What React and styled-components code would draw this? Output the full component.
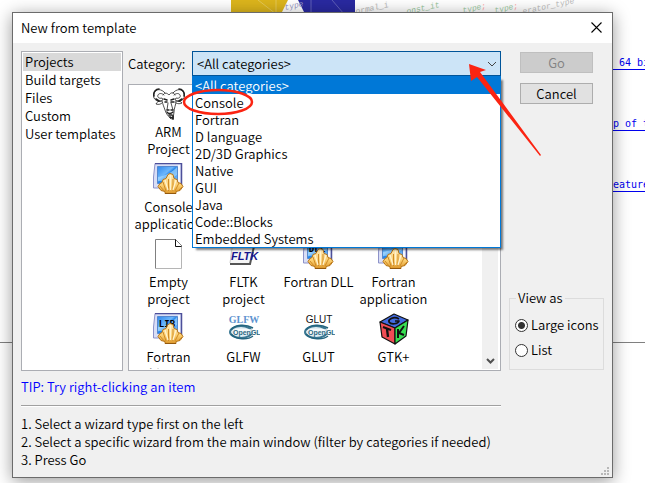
import React, { useState } from 'react';
import styled, { createGlobalStyle, css } from 'styled-components';

const FONT = '"Noto Sans CJK SC", "Noto Sans", sans-serif';

const GlobalStyle = createGlobalStyle`
  *, *::before, *::after { box-sizing: border-box; }
  body {
    margin: 0;
    background: #fff;
    color: #000;
    font: 350 13px/18px ${FONT};
    overflow: hidden;
  }
  button, select, input { font: inherit; color: inherit; margin: 0; }
`;

const Page = styled.div`
  display: grid;
  grid-template-columns: minmax(0, 1fr);
  min-height: 100vh;
`;

const Backdrop = styled.div`
  grid-area: 1 / 1;
  display: flex;
  flex-direction: column;
  overflow: hidden;
`;

const Banner = styled.svg`
  flex: none;
  align-self: flex-end;
  width: 414px;
  height: 40px;
`;

const SiteLinks = styled.nav`
  align-self: flex-end;
  display: flex;
  flex-direction: column;
  gap: 46px;
  width: 32px;
  padding-top: 15px;
  overflow: hidden;
`;

const SiteLink = styled.a`
  height: 15px;
  padding-top: 2px;
  border-bottom: 1px solid #0000ee;
  color: #0000ee;
  font: 10px/12px "DejaVu Sans Mono", monospace;
  text-decoration: none;
  white-space: pre;
`;

const PageRule = styled.hr`
  width: 100%;
  margin: 150px 0 0;
  border: 0;
  border-top: 1px solid #808080;
`;

const Dialog = styled.section`
  grid-area: 1 / 1;
  align-self: start;
  position: relative;
  margin: 12px 32px 5px 12px;
  border: 1px solid #6b6b6b;
  background: #f0f0f0;
  box-shadow: 0 3px 16px rgba(0, 0, 0, 0.4);
`;

const TitleBar = styled.header`
  display: flex;
  align-items: center;
  justify-content: space-between;
  height: 30px;
  padding: 0 8px;
  background: #fff;
`;

const Title = styled.h1`
  margin: 0;
  font-size: 13px;
  font-weight: inherit;
`;

const CloseButton = styled.button`
  display: flex;
  padding: 0 2px 2px;
  border: 0;
  background: none;
`;

const Body = styled.div`
  display: grid;
  grid-template-columns: minmax(0, 1fr) 95px;
  gap: 8px;
  padding: 8px;
`;

const Main = styled.div`
  display: flex;
  flex-direction: column;
  min-width: 0;
`;

const Panes = styled.div`
  display: grid;
  grid-template-columns: 102px minmax(0, 1fr);
  gap: 5px;
`;

const TypeList = styled.ul`
  margin: 0;
  padding: 1px;
  list-style: none;
  border: 1px solid #abadb3;
  background: #fff;
`;

const TypeItem = styled.li`
  padding-left: 2px;
  background: ${(p) => (p.$selected ? '#d9d9d9' : 'transparent')};
`;

const Templates = styled.div`
  display: flex;
  flex-direction: column;
  gap: 8px;
`;

const CategoryRow = styled.div`
  display: flex;
  align-items: center;
  height: 25px;
`;

const CategoryLabel = styled.label`
  flex: none;
  width: 64px;
`;

const Combo = styled.div`
  position: relative;
  flex: 1;
  height: 25px;
`;

const ComboSelect = styled.select`
  appearance: none;
  width: 100%;
  height: 25px;
  padding: 0 24px 0 4px;
  border: 1px solid #005499;
  border-radius: 0;
  background: #cce4f7;
  outline: 0;
`;

const ComboArrow = styled.svg`
  position: absolute;
  top: 9px;
  right: 4px;
  width: 10px;
  height: 8px;
  pointer-events: none;
`;

const Popup = styled.ul`
  position: absolute;
  z-index: 2;
  top: 25px;
  left: 0;
  right: 0;
  margin: 0;
  padding: 0;
  list-style: none;
  border: 1px solid #0078d7;
  background: #fff;
  box-shadow: 3px 3px 2px -1px rgba(0, 0, 0, 0.5);
`;

const PopupItem = styled.li`
  height: 17px;
  padding-left: 2px;
  line-height: 17px;
  cursor: default;
  ${(p) => p.$selected && css`
    background: #0078d7;
    color: #fff;
  `}
`;

const Circle = styled.svg`
  position: absolute;
  z-index: 3;
  top: 36px;
  left: -10px;
  width: 72px;
  height: 30px;
  pointer-events: none;
`;

const Pointer = styled.svg`
  position: absolute;
  z-index: 3;
  top: 11px;
  right: -41px;
  width: 76px;
  height: 94px;
  pointer-events: none;
`;

const IconPane = styled.div`
  display: grid;
  grid-template-columns: minmax(0, 1fr) 17px;
  height: 287px;
  padding: 1px;
  border: 1px solid #abadb3;
  background: #fff;
  overflow: hidden;
`;

const IconGrid = styled.ul`
  display: grid;
  grid-template-columns: repeat(4, 75px);
  grid-auto-rows: 75px;
  min-height: 0;
  margin: 0;
  padding: 2px 0 0 1px;
  list-style: none;
  overflow: hidden;
`;

const IconCell = styled.li`
  display: flex;
  flex-direction: column;
  align-items: center;
  gap: 3px;
  text-align: center;
  line-height: 17px;
  ${(p) => p.$startsRow && css`grid-column: 1;`}

  svg { flex: none; width: 32px; height: 32px; }
`;

const ScrollBar = styled.div`
  display: flex;
  align-items: flex-end;
  justify-content: center;
  padding-bottom: 4px;
  border-right: 1px solid #fff;
  background: #f0f0f0;
`;

const Tip = styled.p`
  margin: 7px 0 9px;
  color: #0000ff;
`;

const Divider = styled.hr`
  width: 100%;
  height: 2px;
  margin: 0 0 8px;
  border: 0;
  border-top: 1px solid #a0a0a0;
  border-bottom: 1px solid #fff;
`;

const Steps = styled.div`
  p { margin: 0; white-space: nowrap; }
`;

const Side = styled.div`
  display: flex;
  flex-direction: column;
`;

const Actions = styled.div`
  display: flex;
  flex-direction: column;
  gap: 10px;
  padding: 1px 11px 0;
`;

const PushButton = styled.button`
  height: 21px;
  padding: 0;
  border: 1px solid #adadad;
  background: #e1e1e1;
  line-height: 18px;

  &:disabled {
    border-color: #bfbfbf;
    background: #cccccc;
    color: #838383;
  }
`;

const ViewAs = styled.fieldset`
  display: flex;
  flex-direction: column;
  gap: 7px;
  min-width: 0;
  height: 81px;
  margin: 185px 0 0;
  padding: 9px 5px 0;
  border: 1px solid #dcdcdc;

  legend { margin-left: 1px; padding: 0 2px; }
`;

const RadioLabel = styled.label`
  display: flex;
  align-items: center;
  gap: 3px;
  white-space: nowrap;

  input {
    appearance: none;
    flex: none;
    width: 13px;
    height: 13px;
    border: 1px solid #333;
    border-radius: 50%;
    background: #fff;
  }
  input:checked {
    background: radial-gradient(circle, #333 0 3px, #fff 4px);
  }
`;

const Grip = styled.svg`
  position: absolute;
  right: 3px;
  bottom: 2px;
  width: 8px;
  height: 8px;
`;

const GnuIcon = () => (
  <svg viewBox="0 0 32 32" fill="none" stroke="#222" strokeWidth=".8" strokeLinecap="round">
    <path d="M12 5C9 1 3 0 1 5s2 9 7 8c2 0 2-2 1-3-3 1-5-1-4-3s4-2 6 0M20 5c3-4 9-5 11 0s-2 9-7 8c-2 0-2-2-1-3 3 1 5-1 4-3s-4-2-6 0" />
    <path d="M1 8C0 4 3 1 6 1M31 8C32 4 29 1 26 1M3 11l3 2M29 11l-3 2" strokeWidth="1.6" />
    <path d="M10 7c2-3 4-2 6 0 2-3 5-3 6 0M8 13c-3 0-4 1-5 3 3 1 5 0 6-1M24 13c3 0 4 1 5 2-2 1-4 1-6 0" />
    <path d="M9 13c1 4 2 6 3 9s2 5 6 9M23 13c0 4-2 7-2 11l-1 7M15 15l-1 7M18 15l2 7" />
    <path d="M11 11l3 1M21 11l-3 1M12 14h2M18 14h3M14 24c1 2 4 2 6 0M14 22h2M18 22h2" strokeWidth="1.5" />
    <path d="M16 27h3M17 29l2 1M20 28v3" strokeWidth="1.700" />
  </svg>
);

const ShellIcon = ({ text }) => (
  <svg viewBox="0 0 32 32">
    <defs>
      <linearGradient id="screen" x1="0" y1="0" x2="1" y2="1">
        <stop offset="0" stopColor="#2f87ec" />
        <stop offset="0.4" stopColor="#6db7fb" />
        <stop offset="0.5" stopColor="#2484ea" />
        <stop offset="1" stopColor="#8ccbff" />
      </linearGradient>
      <linearGradient id="shell" x1="0" y1="0" x2="0" y2="1">
        <stop offset="0" stopColor="#ffe9b4" />
        <stop offset="0.6" stopColor="#fbcf70" />
        <stop offset="1" stopColor="#dc962a" />
      </linearGradient>
    </defs>
    <path d="M2 .5h26.500V25H.5V14z" fill="#d9def6" stroke="#8d92c9" />
    <path d="M2 .5h26.500V24" fill="none" stroke="#4d509a" strokeWidth="1.500" />
    <path d="M26 2v20" stroke="#f4f6ff" strokeWidth="2" />
    <path d="M4.500 3.500h20v17h-20z" fill="url(#screen)" stroke="#5489cf" />
    <path d="M5 14C12 13 20 9 24 4v8C18 16 12 18 5 18z" fill="#b2e1ff" opacity=".6" />
    {text && <text x="14" y="14" textAnchor="middle" fontFamily="DejaVu Sans Mono, monospace" fontWeight="bold" fontSize="9">{text}</text>}
    <path d="M12 30.500v-2l-4-1-3-4 2-3 2-1 1-3 3-1 2-4 2-1 3 1 1 4 3 1 1 3 3 1 2 3-3 4-4 1v2z" fill="url(#shell)" stroke="#b67416" />
    <path d="M15.500 28V16M20 28V16M13 28l-3-9M22 28l4-8M11 28l-4-5M25 28l4-4" fill="none" stroke="#cf8b26" />
    <path d="M17.500 12v15M12 17l3 10M23 17l-3 10" fill="none" stroke="#fff3cf" strokeWidth="1.300" />
    <path d="M12 30.500h11" stroke="#94590d" />
  </svg>
);

const EmptyIcon = () => (
  <svg viewBox="0 0 32 32" fill="none">
    <path d="M2.500 31V1.500H23" stroke="#808080" />
    <path d="M2 30.500h26.500V8" stroke="#b5b5b5" />
    <path d="M22.500 1.500v7h6" stroke="#111" />
    <path d="M23 2l6 6" stroke="#808080" />
  </svg>
);

const FltkIcon = () => (
  <svg viewBox="0 0 32 32">
    <path d="M6 3h21l-5 23H2V9z" fill="#f5f5f5" />
    <path d="M2 26h20l5-22" fill="none" stroke="#555" strokeWidth="2" />
    <path d="M2 25L5 4" stroke="#ccc" />
    <text x="3" y="22" fontFamily="Liberation Sans, sans-serif" fontWeight="bold" fontStyle="italic" fontSize="11" fill="#17178f">FLTK</text>
  </svg>
);

const OpenGlIcon = ({ text, serif }) => (
  <svg viewBox="0 0 32 32">
    <text
      x="16" y="10" textAnchor="middle" fontSize="10"
      fontFamily={serif ? 'Liberation Serif, serif' : 'Liberation Sans, sans-serif'}
      fontWeight={serif ? 'bold' : 'normal'} fill={serif ? '#5e93cf' : '#111'}
    >
      {text}
    </text>
    <ellipse cx="13" cy="19" rx="11" ry="6" fill="#e3eef3" stroke="#3b7893" strokeWidth="2" />
    <path d="M3 17C7 11 18 11 25 15M3 21c5 6 17 6 22 2" fill="none" stroke="#24657f" strokeWidth="1.500" />
    <path d="M7 16h24v5H7z" fill="#fff" opacity=".7" />
    <text x="5" y="22" fontFamily="Liberation Sans, sans-serif" fontWeight="bold" fontSize="7" fill="#2b6983">OpenGL</text>
  </svg>
);

const GtkIcon = () => (
  <svg viewBox="0 0 32 32" stroke="#111" strokeLinejoin="round">
    <path d="M16 1l14 6-13 8L2 9z" fill="#426be0" strokeWidth="1.200" />
    <path d="M2 9l15 6v16L4 24z" fill="#f14d55" strokeWidth="1.200" />
    <path d="M30 7L17 15v16l11-8z" fill="#38e052" strokeWidth="1.200" />
    <path d="M21 6c-5-3-11 0-10 3 2 3 9 2 10-1h-4" fill="none" strokeWidth="1.700" />
    <path d="M5 14l8 3M9 16l1 8" fill="none" strokeWidth="2.300" />
    <path d="M20 16v9M26 13l-5 7 5 2" fill="none" strokeWidth="2" />
  </svg>
);

const types = ['Projects', 'Build targets', 'Files', 'Custom', 'User templates'];

const categories = [
  '<All categories>', 'Console', 'Fortran', 'D language', '2D/3D Graphics',
  'Native', 'GUI', 'Java', 'Code::Blocks', 'Embedded Systems',
];

const templates = [
  { lines: ['ARM', 'Project'], icon: <GnuIcon />, startsRow: true },
  { lines: ['Console', 'application'], icon: <ShellIcon />, startsRow: true },
  { lines: ['Empty', 'project'], icon: <EmptyIcon />, startsRow: true },
  { lines: ['FLTK', 'project'], icon: <FltkIcon /> },
  { lines: ['Fortran DLL'], icon: <ShellIcon text="DLL" /> },
  { lines: ['Fortran', 'application'], icon: <ShellIcon /> },
  { lines: ['Fortran', 'library'], icon: <ShellIcon text="LIB" />, startsRow: true },
  { lines: ['GLFW', 'project'], icon: <OpenGlIcon text="GLFW" serif /> },
  { lines: ['GLUT', 'project'], icon: <OpenGlIcon text="GLUT" /> },
  { lines: ['GTK+', 'project'], icon: <GtkIcon /> },
];

export default function App() {
  const [category, setCategory] = useState(categories[0]);
  const [view, setView] = useState('large');

  return (
    <Page>
      <GlobalStyle />
      <Backdrop>
        <Banner viewBox="0 0 414 40" aria-hidden="true">
          <path d="M0 0h57l-8 16H0z" fill="#dcb51c" />
          <path d="M67 0h57v16H75z" fill="#2929a0" />
          <path d="M27 0l18 14M45 0v14M80 0v14M101 0l12 14" stroke="#fff" opacity=".25" />
          <g fontFamily="Liberation Mono, monospace" fontSize="8" fontStyle="italic">
            <text x="54" y="10" fill="#9999c4" transform="rotate(-12 54 10)">type</text>
            <text x="125" y="14" fill="#b8b8b8" transform="rotate(-12 125 14)">ormal_i</text>
            <text x="176" y="14" fill="#9ac8a0" transform="rotate(-12 176 14)">onst_it</text>
            <text x="232" y="13" fill="#a0cca5" transform="rotate(-12 232 13)">type<tspan fill="#ff9a9a">;</tspan></text>
            <text x="264" y="13" fill="#a0cca5" transform="rotate(-12 264 13)">type<tspan fill="#ff9a9a">;</tspan></text>
            <text x="292" y="14" fill="#bdbdbd" transform="rotate(-12 292 14)">erator_type</text>
          </g>
        </Banner>
        <SiteLinks>
          <SiteLink href="#bits">{' 64 bi'}</SiteLink>
          <SiteLink href="#top">p of t</SiteLink>
          <SiteLink href="#features">eature</SiteLink>
        </SiteLinks>
        <PageRule />
      </Backdrop>

      <Dialog role="dialog" aria-labelledby="dialog-title">
        <TitleBar>
          <Title id="dialog-title">New from template</Title>
          <CloseButton aria-label="Close">
            <svg width="11" height="11" viewBox="0 0 11 11" fill="none" stroke="#000" strokeWidth="1.100">
              <path d="M.5.5l10 10M10.500.5l-10 10" />
            </svg>
          </CloseButton>
        </TitleBar>

        <Body>
          <Main>
            <Panes>
              <TypeList>
                {types.map((t, i) => <TypeItem key={t} $selected={i === 0}>{t}</TypeItem>)}
              </TypeList>
              <Templates>
                <CategoryRow>
                  <CategoryLabel htmlFor="category">Category:</CategoryLabel>
                  <Combo>
                    <ComboSelect id="category" value={category} onChange={(e) => setCategory(e.target.value)}>
                      {categories.map((c) => <option key={c}>{c}</option>)}
                    </ComboSelect>
                    <ComboArrow viewBox="0 0 10 8" fill="none" stroke="#444">
                      <path d="M1 2l4 4 4-4" />
                    </ComboArrow>
                    <Popup role="listbox" aria-label="Category">
                      {categories.map((c) => (
                        <PopupItem
                          key={c} role="option" aria-selected={c === category}
                          $selected={c === category} onClick={() => setCategory(c)}
                        >
                          {c}
                        </PopupItem>
                      ))}
                    </Popup>
                    <Circle viewBox="0 0 72 30" fill="none" stroke="#fb2412" strokeWidth="2.500">
                      <ellipse cx="36" cy="15" rx="34" ry="12" />
                    </Circle>
                    <Pointer viewBox="0 0 76 94" fill="#fb2412">
                      <path d="M3 2l17 6-6 2 61 83-1 1L11 15l-6 4z" />
                    </Pointer>
                  </Combo>
                </CategoryRow>
                <IconPane>
                  <IconGrid>
                    {templates.map((t) => (
                      <IconCell key={t.lines.join(' ')} $startsRow={t.startsRow}>
                        {t.icon}
                        <span>
                          {t.lines[0]}
                          {t.lines[1] && <><br />{t.lines[1]}</>}
                        </span>
                      </IconCell>
                    ))}
                  </IconGrid>
                  <ScrollBar>
                    <svg width="9" height="8" viewBox="0 0 9 8" fill="none" stroke="#505050" strokeWidth="2">
                      <path d="M1 2l3.500 3.500L8 2" />
                    </svg>
                  </ScrollBar>
                </IconPane>
              </Templates>
            </Panes>
            <Tip>TIP: Try right-clicking an item</Tip>
            <Divider />
            <Steps>
              <p>1. Select a wizard type first on the left</p>
              <p>2. Select a specific wizard from the main window (filter by categories if needed)</p>
              <p>3. Press Go</p>
            </Steps>
          </Main>

          <Side>
            <Actions>
              <PushButton disabled>Go</PushButton>
              <PushButton>Cancel</PushButton>
            </Actions>
            <ViewAs>
              <legend>View as</legend>
              <RadioLabel>
                <input type="radio" name="view" checked={view === 'large'} onChange={() => setView('large')} />
                Large icons
              </RadioLabel>
              <RadioLabel>
                <input type="radio" name="view" checked={view === 'list'} onChange={() => setView('list')} />
                List
              </RadioLabel>
            </ViewAs>
          </Side>
        </Body>
        <Grip viewBox="0 0 8 8" fill="#b8b8b8" aria-hidden="true">
          <path d="M6 0h2v2H6zM3 3h2v2H3zM6 3h2v2H6zM0 6h2v2H0zM3 6h2v2H3zM6 6h2v2H6z" />
        </Grip>
      </Dialog>
    </Page>
  );
}
